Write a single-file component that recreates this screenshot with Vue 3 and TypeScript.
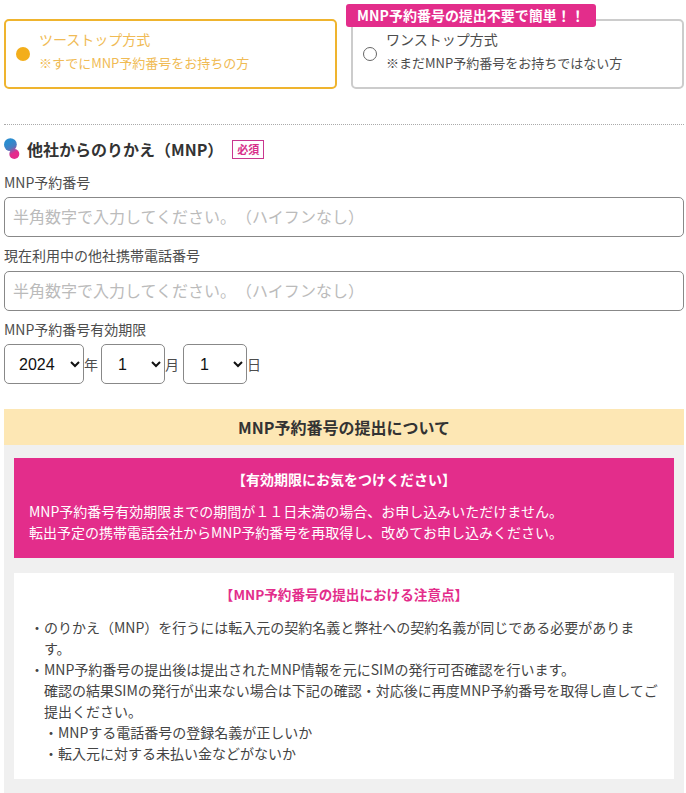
<script setup lang="ts">
const selects = [
  { value: '2024', cls: 'sel-year', unit: '年' },
  { value: '1', cls: 'sel-small', unit: '月' },
  { value: '1', cls: 'sel-small', unit: '日' },
]
</script>

<template>
  <div class="page">
    <div class="choices">
      <div class="choice active">
        <span class="dot"></span>
        <div class="choice-text">
          <div class="c-title">ツーストップ方式</div>
          <div class="c-sub">※すでにMNP予約番号をお持ちの方</div>
        </div>
      </div>
      <div class="choice other">
        <span class="ring"></span>
        <div class="choice-text">
          <div class="c-title">ワンストップ方式</div>
          <div class="c-sub">※まだMNP予約番号をお持ちではない方</div>
        </div>
        <div class="badge">MNP予約番号の提出不要で簡単！！</div>
      </div>
    </div>

    <div class="divider"></div>

    <div class="heading">
      <svg class="logo" width="16" height="22" viewBox="0 0 16 22">
        <defs>
          <linearGradient id="g" gradientUnits="userSpaceOnUse" x1="4" y1="5" x2="10" y2="15">
            <stop offset="0" stop-color="#2b8ccf" />
            <stop offset="0.5" stop-color="#4a7cc0" />
            <stop offset="1" stop-color="#e42c8c" />
          </linearGradient>
        </defs>
        <circle cx="6.4" cy="6.6" r="6.4" fill="url(#g)" />
        <circle cx="10.3" cy="16" r="5" fill="url(#g)" />
      </svg>
      <h2>他社からのりかえ（MNP）</h2>
      <span class="req">必須</span>
    </div>

    <label class="lbl first">MNP予約番号</label>
    <input class="txt" placeholder="半角数字で入力してください。（ハイフンなし）" />
    <label class="lbl second">現在利用中の他社携帯電話番号</label>
    <input class="txt" placeholder="半角数字で入力してください。（ハイフンなし）" />
    <label class="lbl third">MNP予約番号有効期限</label>
    <div class="dates">
      <template v-for="s in selects" :key="s.unit">
        <select :class="['sel', s.cls]"><option>{{ s.value }}</option></select>
        <span class="unit">{{ s.unit }}</span>
      </template>
    </div>

    <div class="notice-head">MNP予約番号の提出について</div>
    <div class="notice-body">
      <div class="alert">
        <div class="alert-title">【有効期限にお気をつけください】</div>
        <p>MNP予約番号有効期限までの期間が１１日未満の場合、お申し込みいただけません。<br />転出予定の携帯電話会社からMNP予約番号を再取得し、改めてお申し込みください。</p>
      </div>
      <div class="card">
        <div class="card-title">【MNP予約番号の提出における注意点】</div>
        <ul>
          <li>のりかえ（MNP）を行うには転入元の契約名義と弊社への契約名義が同じである必要があります。</li>
          <li>MNP予約番号の提出後は提出されたMNP情報を元にSIMの発行可否確認を行います。<br />確認の結果SIMの発行が出来ない場合は下記の確認・対応後に再度MNP予約番号を取得し直してご提出ください。
            <ul class="sub">
              <li>MNPする電話番号の登録名義が正しいか</li>
              <li>転入元に対する未払い金などがないか</li>
            </ul>
          </li>
        </ul>
      </div>
    </div>
  </div>
</template>

<style>
html, body { margin: 0; background: #fff; overflow: hidden; }
</style>

<style scoped>
.page {
  width: 686px;
  height: 793px;
  overflow: hidden;
  box-sizing: border-box;
  padding: 19px 2px 0 4px;
  font-family: "Noto Sans CJK JP", "Noto Sans", sans-serif;
  color: #333;
  font-size: 14px;
  text-spacing-trim: space-all;
}
.choices { display: flex; justify-content: space-between; }
.choice {
  position: relative;
  box-sizing: border-box;
  width: 333px;
  height: 70px;
  border: 2px solid #ccc;
  border-radius: 5px;
  display: flex;
  align-items: center;
  background: #fff;
}
.choice.active { border-color: #efb42e; color: #f0bb55; }
.choice.other { color: #4d4d4d; }
.dot { width: 14px; height: 14px; border-radius: 50%; background: #f3ae1b; margin-left: 10px; margin-right: 9px; flex: none; }
.ring { box-sizing: border-box; width: 14px; height: 14px; border-radius: 50%; border: 1px solid #666; margin-left: 10px; margin-right: 9px; flex: none; }
.choice-text { margin-top: -6px; }
.c-title { font-size: 14px; line-height: 20px; }
.c-sub { font-size: 13px; line-height: 20px; margin-top: 4px; }
.badge {
  position: absolute;
  left: -7px;
  top: -17px;
  height: 23px;
  width: 250px;
  box-sizing: border-box;
  background: #e32d8b;
  color: #fff;
  font-weight: 700;
  font-size: 14px;
  line-height: 23px;
  text-align: center;
  border-radius: 3px;
  white-space: nowrap;
}
.divider { border-top: 1px dotted #aaa; margin-top: 35px; }
.heading { display: flex; align-items: center; height: 24px; margin-top: 12px; }
.logo { flex: none; margin-right: 7px; margin-top: -1px; }
h2 { margin: 0; font-size: 16px; font-weight: 700; color: #333; line-height: 24px; white-space: nowrap; }
.req {
  margin-left: 9px;
  box-sizing: border-box;
  width: 32px;
  height: 19px;
  border: 1px solid #c9378f;
  color: #d8308c;
  font-size: 11px;
  line-height: 17px;
  text-align: center;
  font-weight: 700;
}
.lbl { display: block; font-size: 14px; line-height: 20px; color: #4d4d4d; }
.lbl.first { margin-top: 11px; margin-bottom: 5px; }
.lbl.second { margin-top: 8px; margin-bottom: 6px; }
.lbl.third { margin-top: 8px; margin-bottom: 5px; }
.txt {
  display: block;
  box-sizing: border-box;
  width: 680px;
  height: 40px;
  border: 1px solid #888;
  border-radius: 5px;
  padding: 0 8px 3px;
  font-family: inherit;
  font-size: 16px;
  outline: none;
  text-spacing-trim: space-all;
}
.txt::placeholder { color: #bbb; }
.dates { display: flex; align-items: center; height: 40px; }
.sel {
  box-sizing: border-box;
  height: 40px;
  border: 1px solid #888;
  border-radius: 5px;
  background: #fff;
  color: #111;
  font-family: "Liberation Sans", sans-serif;
  font-size: 16px;
  padding: 0 0 0 10px;
}
.sel-year { width: 80px; }
.sel-small { width: 64px; padding-left: 12px; }
.unit { font-size: 14px; color: #4d4d4d; width: 17px; text-align: left; }
.unit:nth-of-type(2) { margin-right: 1px; }
.notice-head {
  margin-top: 25px;
  height: 36px;
  background: #fde7b4;
  text-align: center;
  font-weight: 700;
  font-size: 16px;
  line-height: 36px;
  color: #333;
}
.notice-body { background: #f0f0f0; padding: 13px 10px 14px; }
.alert { background: #e32d8b; color: #fff; padding: 11px 15px 13px; height: 100px; box-sizing: border-box; }
.alert-title { text-align: center; font-weight: 700; font-size: 14px; line-height: 20px; }
.alert p { margin: 12px 0 0; font-size: 14px; line-height: 21px; white-space: nowrap; }
.card { background: #fff; margin-top: 15px; padding: 11px 16px 15px; }
.card-title { text-align: center; font-weight: 700; font-size: 13.6px; color: #e32d8b; line-height: 20px; margin-bottom: 13px; }
.card ul { margin: 0; padding: 0; list-style: none; font-size: 14px; line-height: 21px; color: #444; }
.card li { position: relative; padding-left: 14px; }
.card li::before { content: "・"; position: absolute; left: 0; }
.card ul.sub li { padding-left: 14px; }
</style>
